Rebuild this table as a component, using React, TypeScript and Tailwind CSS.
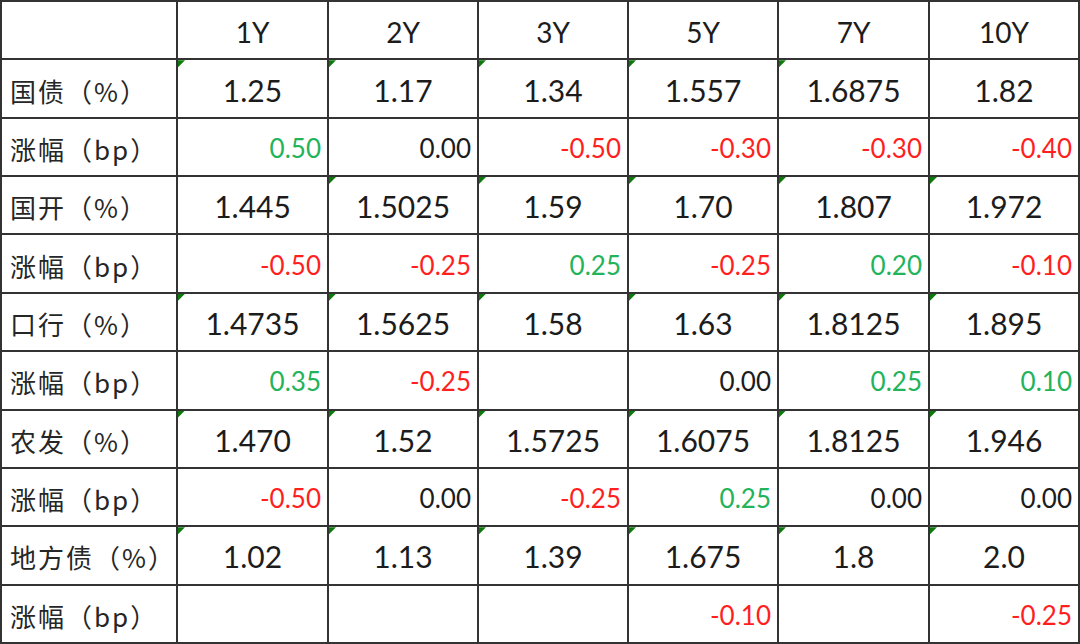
import React from "react";

type Tone = "k" | "g" | "r";
type Cell = { v: string; t?: Tone; tri?: boolean };

const headers = ["1Y", "2Y", "3Y", "5Y", "7Y", "10Y"];

// rate rows are centered, change rows right aligned
const rows: { label: string; kind: "rate" | "bp"; cells: Cell[] }[] = [
  {
    label: "国债（%）",
    kind: "rate",
    cells: [
      { v: "1.25", tri: true },
      { v: "1.17", tri: true },
      { v: "1.34", tri: true },
      { v: "1.557", tri: true },
      { v: "1.6875", tri: true },
      { v: "1.82" },
    ],
  },
  {
    label: "涨幅（bp）",
    kind: "bp",
    cells: [
      { v: "0.50", t: "g" },
      { v: "0.00" },
      { v: "-0.50", t: "r" },
      { v: "-0.30", t: "r" },
      { v: "-0.30", t: "r" },
      { v: "-0.40", t: "r" },
    ],
  },
  {
    label: "国开（%）",
    kind: "rate",
    cells: [
      { v: "1.445" },
      { v: "1.5025", tri: true },
      { v: "1.59", tri: true },
      { v: "1.70", tri: true },
      { v: "1.807", tri: true },
      { v: "1.972", tri: true },
    ],
  },
  {
    label: "涨幅（bp）",
    kind: "bp",
    cells: [
      { v: "-0.50", t: "r" },
      { v: "-0.25", t: "r" },
      { v: "0.25", t: "g" },
      { v: "-0.25", t: "r" },
      { v: "0.20", t: "g" },
      { v: "-0.10", t: "r" },
    ],
  },
  {
    label: "口行（%）",
    kind: "rate",
    cells: [
      { v: "1.4735", tri: true },
      { v: "1.5625", tri: true },
      { v: "1.58", tri: true },
      { v: "1.63", tri: true },
      { v: "1.8125", tri: true },
      { v: "1.895", tri: true },
    ],
  },
  {
    label: "涨幅（bp）",
    kind: "bp",
    cells: [
      { v: "0.35", t: "g" },
      { v: "-0.25", t: "r" },
      { v: "" },
      { v: "0.00" },
      { v: "0.25", t: "g" },
      { v: "0.10", t: "g" },
    ],
  },
  {
    label: "农发（%）",
    kind: "rate",
    cells: [
      { v: "1.470", tri: true },
      { v: "1.52", tri: true },
      { v: "1.5725", tri: true },
      { v: "1.6075", tri: true },
      { v: "1.8125", tri: true },
      { v: "1.946", tri: true },
    ],
  },
  {
    label: "涨幅（bp）",
    kind: "bp",
    cells: [
      { v: "-0.50", t: "r" },
      { v: "0.00" },
      { v: "-0.25", t: "r" },
      { v: "0.25", t: "g" },
      { v: "0.00" },
      { v: "0.00" },
    ],
  },
  {
    label: "地方债（%）",
    kind: "rate",
    cells: [
      { v: "1.02", tri: true },
      { v: "1.13", tri: true },
      { v: "1.39", tri: true },
      { v: "1.675", tri: true },
      { v: "1.8", tri: true },
      { v: "2.0", tri: true },
    ],
  },
  {
    label: "涨幅（bp）",
    kind: "bp",
    cells: [
      { v: "" },
      { v: "" },
      { v: "" },
      { v: "-0.10", t: "r" },
      { v: "" },
      { v: "-0.25", t: "r" },
    ],
  },
];

const toneClass: Record<Tone, string> = {
  k: "text-[#1c1c1c]",
  g: "text-[#22b35b]",
  r: "text-[#ff1f1f]",
};

const numFont = { fontFamily: "Lato, 'Liberation Sans', sans-serif" };
const cjkFont = { fontFamily: "'Noto Sans CJK SC', 'Noto Sans', sans-serif" };

export default function App() {
  return (
    <div className="w-[1080px] h-[644px] bg-white">
      <div className="grid h-full w-full grid-cols-[174px_149px_148px_148px_148px_149px_148px] grid-rows-[repeat(11,minmax(0,1fr))] gap-[2px] bg-[#333333] p-[2px]">
        {/* header row */}
        <div className="bg-white" />
        {headers.map((h) => (
          <div
            key={h}
            style={numFont}
            className="flex items-center justify-center bg-white pt-[3px] text-[28px] text-[#1c1c1c]"
          >
            {h}
          </div>
        ))}

        {rows.map((row, ri) => (
          <React.Fragment key={ri}>
            <div
              style={cjkFont}
              className="flex items-center whitespace-nowrap bg-white pl-[8px] pt-[3px] text-[26px] tracking-[2px] text-[#262626]"
            >
              {row.label}
            </div>
            {row.cells.map((c, ci) => (
              <div
                key={ci}
                style={numFont}
                className={`relative flex items-center bg-white pt-[3px] ${
                  row.kind === "rate"
                    ? "justify-center text-[30px]"
                    : "justify-end pr-[6px] text-[26px]"
                } ${toneClass[c.t ?? "k"]}`}
              >
                {c.tri && (
                  <span className="absolute left-0 top-0 h-[7px] w-[7px] bg-[#0b7a0b] [clip-path:polygon(0_0,100%_0,0_100%)]" />
                )}
                {c.v}
              </div>
            ))}
          </React.Fragment>
        ))}
      </div>
    </div>
  );
}
